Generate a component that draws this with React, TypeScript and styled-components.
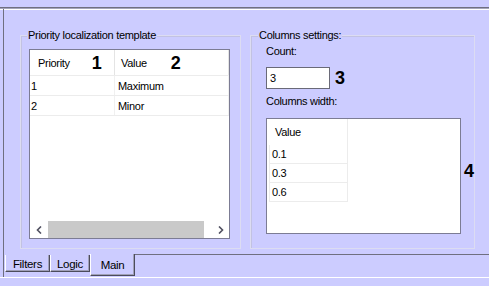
import * as React from 'react'
import styled, { createGlobalStyle } from 'styled-components'

const GlobalStyle = createGlobalStyle`
  html, body {
    margin: 0;
    padding: 0;
    background: #ccccff;
  }

  body {
    color: #000;
    font-family: "Liberation Sans", Arial, sans-serif;
    font-size: 11px;
    letter-spacing: -0.3px;
  }
`

/**
 * Window component.
 */
const Window = styled.div`
  background: #ccccff;
  box-sizing: border-box;
  display: flex;
  flex-direction: column;
  height: 286px;
  overflow: hidden;
  padding-top: 7px;
  width: 489px;
`

/**
 * TabControl component.
 */
const TabControl = styled.div`
  border-bottom: 1px solid #ffffff;
  border-top: 1px solid #6f6f80;
  box-shadow: inset 0 1px 0 #a4a4bc, inset 0 2px 0 #ffffff;
  box-sizing: border-box;
  display: flex;
  flex-direction: column;
  height: 271px;
`

/**
 * Body component.
 */
const Body = styled.div`
  border-left: 1px solid #6f6f80;
  display: flex;
  flex: 1;
  flex-direction: column;
  margin: 1px 0 0 3px;
`

/**
 * Groups component.
 */
const Groups = styled.div`
  box-sizing: border-box;
  display: flex;
  gap: 9px;
  height: 245px;
  padding: 26px 0 0 16px;
`

/**
 * Group component.
 */
const Group = styled.div<{ $width: number }>`
  border: 1px solid #dcdcf2;
  box-shadow: inset 1px 1px 0 #c2c2e2;
  box-sizing: border-box;
  display: flex;
  flex-direction: column;
  height: 214px;
  padding: 0 0 0 ${(p) => (p.$width > 222 ? 15 : 8)}px;
  width: ${(p) => p.$width}px;
`

/**
 * Legend component.
 */
const Legend = styled.div<{ $indent: number }>`
  align-self: flex-start;
  background: #ccccff;
  line-height: 13px;
  margin: -7px 0 0 ${(p) => p.$indent}px;
  padding: 0 1px;
`

/**
 * Label component.
 */
const Label = styled.div<{ $top: number }>`
  line-height: 13px;
  margin-top: ${(p) => p.$top}px;
`

/**
 * Marker component, the bold annotation digits.
 */
const Marker = styled.span<{ $left: number }>`
  font-size: 18px;
  font-weight: bold;
  letter-spacing: 0;
  line-height: 1;
  margin-left: ${(p) => p.$left}px;
`

/**
 * ListView component.
 */
const ListView = styled.div<{ $width: number; $height: number; $top: number }>`
  background: #ffffff;
  border: 1px solid #7c7c94;
  box-sizing: border-box;
  display: flex;
  flex-direction: column;
  height: ${(p) => p.$height}px;
  margin-top: ${(p) => p.$top}px;
  width: ${(p) => p.$width}px;
`

/**
 * Header row component.
 */
const HeaderRow = styled.div`
  border-bottom: 1px solid #ececec;
  display: flex;
  height: 25px;
`

/**
 * Header cell component.
 */
const HeaderCell = styled.div<{ $width?: number; $pad: number }>`
  align-items: center;
  border-right: 1px solid #e4e4e4;
  box-sizing: border-box;
  display: flex;
  flex: ${(p) => (p.$width ? `0 0 ${p.$width}px` : '1')};
  padding-left: ${(p) => p.$pad}px;
`

/**
 * Row component.
 */
const Row = styled.div`
  border-bottom: 1px solid #ececec;
  display: flex;
  height: 19px;
`

/**
 * Cell component.
 */
const Cell = styled.div<{ $width?: number; $pad: number }>`
  align-items: center;
  border-right: 1px solid #f0f0f0;
  box-sizing: border-box;
  display: flex;
  flex: ${(p) => (p.$width ? `0 0 ${p.$width}px` : '1')};
  padding-left: ${(p) => p.$pad}px;
`

/**
 * Spacer component.
 */
const Spacer = styled.div`
  flex: 1;
`

/**
 * ScrollBar component.
 */
const ScrollBar = styled.div`
  display: flex;
  height: 17px;
`

/**
 * Scroll arrow button component.
 */
const ArrowButton = styled.div`
  align-items: center;
  display: flex;
  flex: 0 0 17px;
  justify-content: center;
`

/**
 * Scroll track component.
 */
const Track = styled.div`
  display: flex;
  flex: 1;
  padding: 0 8px 0 1px;
`

/**
 * Scroll thumb component.
 */
const Thumb = styled.div`
  background: #c9c9c9;
  flex: 1;
`

/**
 * Input row component.
 */
const InputRow = styled.div`
  align-items: center;
  display: flex;
  margin-top: 9px;
`

/**
 * TextBox component.
 */
const TextBox = styled.div`
  align-items: center;
  background: #ffffff;
  border: 1px solid #6a6a78;
  box-sizing: border-box;
  display: flex;
  height: 22px;
  padding-left: 3px;
  width: 64px;
`

/**
 * Side row component, a list with its marker beside it.
 */
const SideRow = styled.div`
  align-items: center;
  display: flex;
`

/**
 * Grid column component for the widths list.
 */
const Grid = styled.div`
  display: flex;
  flex-direction: column;
  width: 81px;
`

/**
 * Grid header component.
 */
const GridHeader = styled.div`
  align-items: center;
  border-right: 1px solid #ececec;
  display: flex;
  height: 26px;
  padding-left: 8px;
`

/**
 * Grid row component.
 */
const GridRow = styled.div`
  align-items: center;
  border-bottom: 1px solid #ececec;
  border-left: 1px solid #ececec;
  border-right: 1px solid #ececec;
  display: flex;
  height: 18px;
  margin-left: 2px;
  padding-left: 2px;
`

/**
 * TabStrip component.
 */
const TabStrip = styled.div`
  align-items: flex-start;
  display: flex;
  flex: 1;
  padding-left: 1px;
`

/**
 * Tab component.
 */
const Tab = styled.div<{ $width: number; $active?: boolean }>`
  align-items: center;
  background: #ccccff;
  border-bottom: 1px solid #4c4c5c;
  border-left: 1px solid #ffffff;
  border-right: 1px solid #4c4c5c;
  box-shadow: inset -1px -1px 0 #a0a0b8;
  box-sizing: border-box;
  display: flex;
  font-size: 11.5px;
  height: ${(p) => (p.$active ? 22 : 17)}px;
  justify-content: center;
  margin-top: ${(p) => (p.$active ? 0 : 1)}px;
  padding-top: ${(p) => (p.$active ? 0 : 1)}px;
  width: ${(p) => p.$width}px;
`

/**
 * Filler after the tabs.
 */
const TabFiller = styled.div`
  border-top: 1px solid #6f6f80;
  flex: 1;
`

type Chevron = 'left' | 'right'

/**
 * Scroll arrow icon.
 */
const Arrow = ({ dir }: { dir: Chevron }) => (
  <svg width="6" height="8" viewBox="0 0 6 8">
    <polyline
      points={dir === 'left' ? '5,0.5 1.5,4 5,7.5' : '1,0.5 4.5,4 1,7.5'}
      fill="none"
      stroke="#505060"
      strokeWidth="1.6"
    />
  </svg>
)

const priorities = [
  { priority: '1', value: 'Maximum' },
  { priority: '2', value: 'Minor' },
]

const widths = ['0.1', '0.3', '0.6']

/**
 * App Component.
 */
export default class App extends React.Component {
  /**
   * Renders the component.
   * @return Element to render.
   */
  public render() {
    return (
      <Window>
        <GlobalStyle />
        <TabControl>
          <Body>
            <Groups>
              <Group $width={221}>
                <Legend $indent={-2}>Priority localization template</Legend>
                <ListView $width={201} $height={190} $top={7}>
                  <HeaderRow>
                    <HeaderCell $width={85} $pad={8}>
                      Priority
                      <Marker $left={22}>1</Marker>
                    </HeaderCell>
                    <HeaderCell $pad={6}>
                      Value
                      <Marker $left={24}>2</Marker>
                    </HeaderCell>
                  </HeaderRow>
                  {priorities.map((item) => (
                    <Row key={item.priority}>
                      <Cell $width={85} $pad={1}>
                        {item.priority}
                      </Cell>
                      <Cell $pad={3}>{item.value}</Cell>
                    </Row>
                  ))}
                  <Spacer />
                  <ScrollBar>
                    <ArrowButton>
                      <Arrow dir="left" />
                    </ArrowButton>
                    <Track>
                      <Thumb />
                    </Track>
                    <ArrowButton>
                      <Arrow dir="right" />
                    </ArrowButton>
                  </ScrollBar>
                </ListView>
              </Group>
              <Group $width={225}>
                <Legend $indent={-8}>Columns settings:</Legend>
                <Label $top={3}>Count:</Label>
                <InputRow>
                  <TextBox>3</TextBox>
                  <Marker $left={5}>3</Marker>
                </InputRow>
                <Label $top={6}>Columns width:</Label>
                <SideRow>
                  <ListView $width={195} $height={116} $top={10}>
                    <Grid>
                      <GridHeader>Value</GridHeader>
                      {widths.map((w) => (
                        <GridRow key={w}>{w}</GridRow>
                      ))}
                    </Grid>
                  </ListView>
                  <Marker $left={3}>4</Marker>
                </SideRow>
              </Group>
            </Groups>
            <TabStrip>
              <Tab $width={45}>Filters</Tab>
              <Tab $width={40}>Logic</Tab>
              <Tab $width={45} $active>
                Main
              </Tab>
              <TabFiller />
            </TabStrip>
          </Body>
        </TabControl>
      </Window>
    )
  }
}
